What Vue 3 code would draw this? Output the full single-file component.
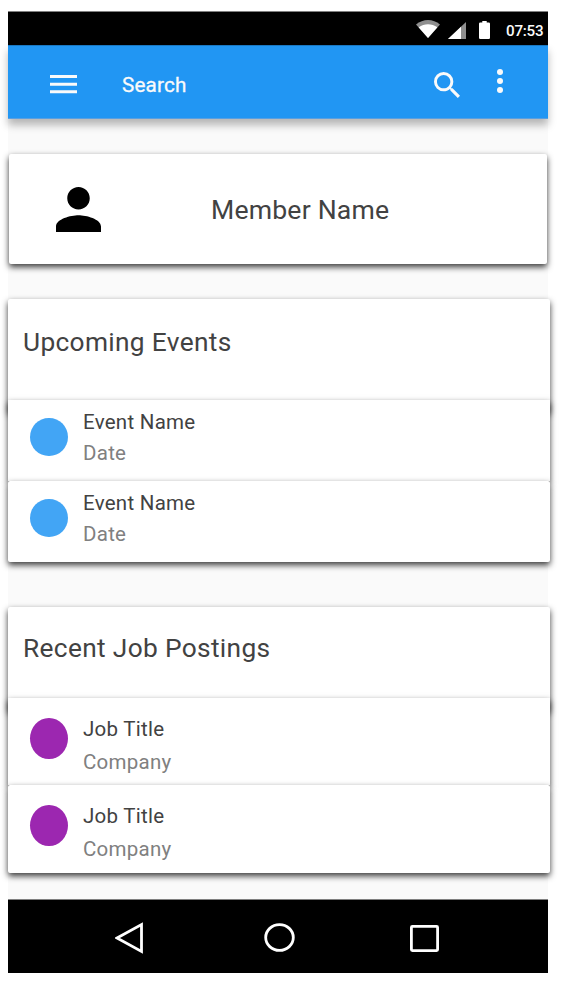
<script setup>
const sections = [
  {
    id: 'events',
    title: 'Upcoming Events',
    items: [
      { name: 'Event Name', detail: 'Date' },
      { name: 'Event Name', detail: 'Date' },
    ],
  },
  {
    id: 'jobs',
    title: 'Recent Job Postings',
    items: [
      { name: 'Job Title', detail: 'Company' },
      { name: 'Job Title', detail: 'Company' },
    ],
  },
]
</script>

<template>
  <div class="page">
    <div class="screen">
      <div class="status">
        <svg class="wifi" viewBox="0 0 24 18">
          <path d="M0 4.6C7-1.4 17-1.4 24 4.6L12 18Z" fill="#8f8f8f" />
          <path d="M2.6 7.3C8.5 3.1 15.5 3.1 21.4 7.3L12 18Z" fill="#fff" />
        </svg>
        <svg class="signal" viewBox="0 0 18 17">
          <path d="M0 17L18 0V17Z" fill="#8f8f8f" />
          <path d="M0 17L13 4.7V17Z" fill="#fff" />
        </svg>
        <svg class="battery" viewBox="0 0 11 18">
          <path d="M3.3 0H7.7V1.6H9.8Q11 1.6 11 2.8V16.8Q11 18 9.8 18H1.2Q0 18 0 16.8V2.8Q0 1.6 1.2 1.6H3.3Z" fill="#fff" />
        </svg>
        <span class="time">07:53</span>
      </div>

      <header class="appbar">
        <svg class="menu" viewBox="0 0 27 19">
          <path d="M0 0H27V3.1H0ZM0 7.7H27V10.8H0ZM0 15.2H27V18.3H0Z" />
        </svg>
        <span class="search-label">Search</span>
        <svg class="search" viewBox="3 3 17.49 17.49" preserveAspectRatio="none">
          <path d="M15.5 14h-.79l-.28-.27A6.47 6.47 0 0 0 16 9.5 6.5 6.5 0 1 0 9.5 16c1.61 0 3.09-.59 4.23-1.57l.27.28v.79l5 4.99L20.49 19l-4.99-5zm-6 0C7.01 14 5 11.99 5 9.5S7.01 5 9.5 5 14 7.01 14 9.5 11.99 14 9.5 14z" />
        </svg>
        <svg class="more" viewBox="0 0 6 24">
          <circle cx="3" cy="3" r="3" />
          <circle cx="3" cy="12" r="3" />
          <circle cx="3" cy="21" r="3" />
        </svg>
      </header>

      <main class="content">
        <div class="member card">
          <svg class="person" viewBox="4 4 16 16">
            <path d="M12 12c2.21 0 4-1.79 4-4s-1.79-4-4-4-4 1.79-4 4 1.79 4 4 4zm0 2c-2.67 0-8 1.34-8 4v2h16v-2c0-2.66-5.33-4-8-4z" />
          </svg>
          <span class="member-name">Member Name</span>
        </div>

        <section v-for="s in sections" :key="s.id" :class="['group', s.id]">
          <div class="heading card"><h2>{{ s.title }}</h2></div>
          <div v-for="(item, i) in s.items" :key="i" class="item card">
            <span class="dot"></span>
            <div class="lines">
              <span class="name">{{ item.name }}</span>
              <span class="detail">{{ item.detail }}</span>
            </div>
          </div>
        </section>
      </main>

      <nav class="navbar">
        <svg class="back" viewBox="0 0 28 32">
          <path d="M2 16L26.5 2.5V29.5Z" />
        </svg>
        <svg class="home" viewBox="0 0 31 29">
          <ellipse cx="15.5" cy="14.5" rx="13.8" ry="12.9" />
        </svg>
        <svg class="recent" viewBox="0 0 29 27">
          <rect x="1.4" y="1.4" width="26.2" height="24.2" rx="1" />
        </svg>
      </nav>
    </div>
  </div>
</template>

<style>
body {
  background: #fff;
}
</style>

<style scoped>
.page {
  box-sizing: border-box;
  width: 567px;
  height: 986px;
  padding: 11px 0 0 8px;
  overflow: hidden;
  font-family: Roboto, "Liberation Sans", sans-serif;
}
svg {
  display: block;
  flex: none;
}
.screen {
  display: flex;
  flex-direction: column;
  width: 540px;
  height: 962px;
  background: #fafafa;
}
.status {
  box-sizing: border-box;
  display: flex;
  height: 34px;
  padding-left: 408px;
  background: #000;
  border-top: 1px solid #808080;
}
.wifi {
  width: 24px;
  height: 18px;
  margin-top: 8px;
}
.signal {
  width: 18px;
  height: 17px;
  margin: 10px 0 0 8px;
}
.battery {
  width: 11px;
  height: 18px;
  margin: 8.5px 0 0 13px;
}
.time {
  margin-left: 16px;
  padding-top: 9px;
  font-size: 15.2px;
  font-weight: 500;
  line-height: 20px;
  letter-spacing: -0.25px;
  color: #fafafa;
}
.appbar {
  box-sizing: border-box;
  display: flex;
  height: 74px;
  padding-left: 42px;
  background: #2196f3;
  border-top: 1px solid #1a78c2;
  border-bottom: 1px solid #5a9fe0;
  box-shadow: 0 6px 8px rgba(0, 0, 0, 0.28);
}
.appbar svg {
  fill: #fafafa;
}
.menu {
  width: 27px;
  height: 19px;
  margin-top: 29px;
}
.search-label {
  width: 312px;
  margin: 24px 0 0 45px;
  font-size: 20.7px;
  line-height: 30px;
  letter-spacing: 0.15px;
  -webkit-text-stroke: 0.3px #fafafa;
  color: #fafafa;
}
.search {
  width: 26px;
  height: 26px;
  margin-top: 26px;
}
.more {
  width: 6px;
  height: 24px;
  margin: 23px 0 0 37px;
}
.content {
  flex: 1;
  padding-top: 35px;
}
.card {
  box-sizing: border-box;
  background: #fff;
  border-radius: 2px;
  box-shadow: 0 3px 6px rgba(0, 0, 0, 0.78);
}
.member {
  display: flex;
  width: 538px;
  height: 110px;
  margin-left: 1px;
  padding: 33px 0 0 47px;
}
.person {
  width: 45px;
  height: 45px;
}
.member-name {
  margin: 3px 0 0 110px;
  font-size: 26.6px;
  line-height: 40px;
  letter-spacing: 0.2px;
  color: #424242;
}
.group {
  width: 542px;
}
.events {
  margin-top: 35px;
}
.jobs {
  margin-top: 45px;
}
.heading {
  height: 113px;
  margin-bottom: -12px;
  padding: 23px 0 0 15px;
}
.jobs .heading {
  height: 104px;
  margin-bottom: -13px;
  padding-top: 21px;
}
h2 {
  margin: 0;
  font-size: 26.3px;
  font-weight: 400;
  line-height: 40px;
  letter-spacing: 0.33px;
  color: #424242;
}
.item {
  display: flex;
  height: 81px;
  padding-left: 22.4px;
}
.item:nth-child(2) {
  border-radius: 0;
}
.dot {
  width: 37.6px;
  height: 38px;
  margin-top: 18px;
  border-radius: 50%;
  background: #42a5f5;
}
.lines {
  display: flex;
  flex-direction: column;
  gap: 1px;
  margin: 7px 0 0 15px;
  font-size: 20.5px;
  line-height: 30px;
  letter-spacing: 0.27px;
}
.jobs .item {
  height: 87px;
}
.jobs .item:last-child {
  height: 87.5px;
}
.jobs .dot {
  height: 41px;
  margin-top: 20px;
  background: #9c27b0;
}
.jobs .lines {
  gap: 3px;
  margin-top: 16px;
}
.name {
  color: #424242;
}
.detail {
  color: #808080;
}
.navbar {
  box-sizing: border-box;
  display: flex;
  height: 74px;
  padding-left: 107px;
  background: #000;
  border-top: 1px solid #808080;
}
.navbar svg {
  fill: none;
  stroke: #fff;
  stroke-width: 2.8;
}
.back {
  width: 28px;
  height: 32px;
  margin-top: 22px;
}
.home {
  width: 31px;
  height: 29px;
  margin: 23px 0 0 121px;
}
.recent {
  width: 29px;
  height: 27px;
  margin: 25px 0 0 115px;
}
</style>
